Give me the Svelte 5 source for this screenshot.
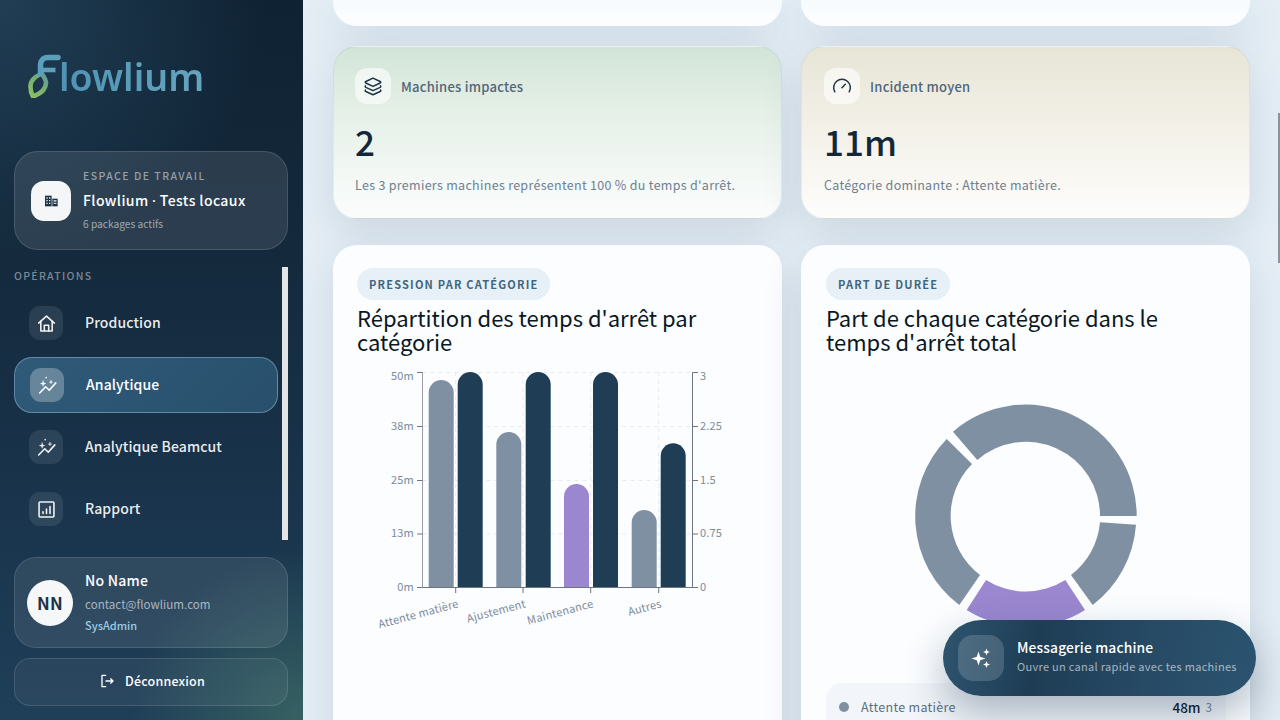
<script>
  const nav = [
    { label: 'Production', icon: 'home' },
    { label: 'Analytique', icon: 'spark', active: true },
    { label: 'Analytique Beamcut', icon: 'spark' },
    { label: 'Rapport', icon: 'report' }
  ];

  const stats = [
    { label: 'Machines impactes', icon: 'layers', value: '2', note: "Les 3 premiers machines représentent 100 % du temps d'arrêt.", tone: 'green' },
    { label: 'Incident moyen', icon: 'gauge', value: '11m', note: 'Catégorie dominante : Attente matière.', tone: 'sand' }
  ];

  // chart geometry, in the coordinates of the svg
  const bottom = 220;
  const bars = [
    { x: 61.7, top: 13, w: 25, color: '#7f90a3' },
    { x: 90.7, top: 5, w: 25, color: '#1f3e56' },
    { x: 129.3, top: 65, w: 25, color: '#7f90a3' },
    { x: 158.7, top: 5, w: 25, color: '#1f3e56' },
    { x: 197, top: 117, w: 25, color: '#9a87d0' },
    { x: 226, top: 5, w: 25, color: '#1f3e56' },
    { x: 264.7, top: 143, w: 25, color: '#7f90a3' },
    { x: 293.7, top: 76.3, w: 25, color: '#1f3e56' }
  ];
  const rows = [
    { y: 5.5, left: '50m', right: '3', shift: 7 },
    { y: 59.5, left: '38m', right: '2.25', shift: 3 },
    { y: 113.5, left: '25m', right: '1.5', shift: 3 },
    { y: 167, left: '13m', right: '0.75', shift: 3 },
    { y: 220.5, left: '0m', right: '0', shift: 3 }
  ];
  const cats = [
    { x: 88.7, label: 'Attente matière' },
    { x: 156, label: 'Ajustement' },
    { x: 223.7, label: 'Maintenance' },
    { x: 291.7, label: 'Autres' }
  ];

  function barPath(b) {
    const r = b.w / 2;
    return `M${b.x} ${bottom}V${b.top + r}A${r} ${r} 0 0 1 ${b.x + b.w} ${b.top + r}V${bottom}Z`;
  }

  const slices = [
    { d: 'M953 431.7A111 111 0 0 1 1136.7 516H1100A74 74 0 0 0 977.3 460Z', color: '#7f90a3' },
    { d: 'M1136 524.7A111 111 0 0 1 1092.7 605L1071 575A74 74 0 0 0 1100 522.3Z', color: '#7f90a3' },
    { d: 'M1085 610A111 111 0 0 1 966.7 610L986 580A74 74 0 0 0 1065.3 580Z', color: '#9a87d0' },
    { d: 'M959.3 605A111 111 0 0 1 946.7 439L972 464A74 74 0 0 0 980 575Z', color: '#7f90a3' }
  ];
</script>

{#snippet icon(name)}
  <svg viewBox="0 0 24 24" fill="none" stroke="currentColor" stroke-width="2" stroke-linecap="round" stroke-linejoin="round">
    {#if name === 'home'}
      <path d="M3 11.5 12 3.5l9 8" />
      <path d="M5.5 9.5V20.5h13V9.5" />
      <path d="M9.5 20.5v-6.5h5v6.5" />
    {:else if name === 'spark'}
      <path d="M3 20.5 10 13.5l4 4 7.5-8.5" />
      <path d="M7 6.5 7.8 9l2.4.8-2.4.8-.8 2.4-.8-2.4-2.4-.8 2.4-.8Z" fill="currentColor" stroke-width="0.4" />
      <path d="M16 6l.5 1.6 1.6.5-1.6.5-.5 1.6-.5-1.6-1.6-.5 1.6-.5Z" fill="currentColor" stroke-width="0.4" />
      <path d="M10.5 3v.01" />
    {:else if name === 'report'}
      <rect x="3.5" y="3.5" width="17" height="17" rx="1" />
      <path d="M8 16.5v-2M12 16.5v-5M16 16.5v-8" />
    {:else if name === 'layers'}
      <path d="M12 2.5 3.4 6.6c-.9.4-.9 1.4 0 1.8L12 12.5l8.6-4.1c.9-.4.9-1.4 0-1.8Z" />
      <path d="M3 11.8c-.6.7-.4 1.4.4 1.8l8.6 4 8.6-4c.8-.4 1-1.1.4-1.8" />
      <path d="M3 16.8c-.6.7-.4 1.4.4 1.8l8.6 3.9 8.6-3.9c.8-.4 1-1.1.4-1.8" />
    {:else if name === 'gauge'}
      <path d="m12 14 4-4" />
      <path d="M3.34 19a10 10 0 1 1 17.32 0" />
    {/if}
  </svg>
{/snippet}

<div class="shell">
  <aside class="sidebar">
    <div class="logo">
      <svg class="logo-mark" viewBox="0 0 36 46" fill="none">
        <defs>
          <linearGradient id="leaf" x1="0" y1="1" x2="0.6" y2="0">
            <stop offset="0" stop-color="#8cc063" />
            <stop offset="0.65" stop-color="#76ae70" />
            <stop offset="1" stop-color="#5f9f9a" />
          </linearGradient>
        </defs>
        <path d="M13 22C6 25 2 29 2.5 35 2.5 39 3.5 42 5 44.5 12 42 18.5 38 18 30 17.5 26 15 24 13 20" stroke="url(#leaf)" stroke-width="4.6" stroke-linejoin="round" />
        <path d="M30 5.5H20C15 5.5 12.5 8.5 12.5 13V21" stroke="#5c9fbc" stroke-width="5.5" stroke-linecap="round" />
        <path d="M12 18H27.5" stroke="#5c9fbc" stroke-width="4.6" />
      </svg>
      <span class="logo-text">lowlium</span>
    </div>

    <div class="workspace">
      <div class="workspace-icon">
        <svg viewBox="0 0 24 24" fill="#1d3347">
          <path d="M3 4h10v16H3Z" />
          <path d="M14 8.5h8V20h-8Z" />
          <path d="M5 6.5h2V8.5H5Zm4 0h2V8.5H9ZM5 10.5h2v2H5Zm4 0h2v2H9ZM5 14.5h2v2H5Zm4 0h2v2H9ZM15.8 11h4.4v1.8h-4.4Zm0 3.5h4.4v1.8h-4.4Z" fill="#f4f6f8" />
        </svg>
      </div>
      <div class="workspace-text">
        <div class="eyebrow">ESPACE DE TRAVAIL</div>
        <div class="workspace-name">Flowlium <span class="mid">·</span> Tests locaux</div>
        <div class="workspace-sub">6 packages actifs</div>
      </div>
    </div>

    <div class="section-label">OPÉRATIONS</div>

    <nav class="nav">
      {#each nav as item}
        <div class="nav-item" class:active={item.active}>
          <span class="nav-icon">{@render icon(item.icon)}</span>
          <span class="nav-label">{item.label}</span>
        </div>
      {/each}
      <div class="side-scroll"></div>
    </nav>

    <div class="user">
      <div class="avatar">NN</div>
      <div class="user-text">
        <div class="user-name">No Name</div>
        <div class="user-mail">contact@flowlium.com</div>
        <div class="user-role">SysAdmin</div>
      </div>
    </div>

    <div class="logout">
      <svg viewBox="0 0 24 24" fill="none" stroke="currentColor" stroke-width="2" stroke-linecap="round" stroke-linejoin="round">
        <path d="M10 3.5H4.5v17H10" />
        <path d="M10.5 12H21M17.5 8.8 21 12l-3.5 3.2" />
      </svg>
      <span>Déconnexion</span>
    </div>
  </aside>

  <main class="main">
    <div class="grid">
      <div class="card stub"></div>
      <div class="card stub"></div>

      {#each stats as s}
        <section class="card stat {s.tone}">
          <div class="stat-head">
            <span class="stat-icon">{@render icon(s.icon)}</span>
            <span class="stat-label">{s.label}</span>
          </div>
          <div class="stat-value">{s.value}</div>
          <div class="stat-note">{s.note}</div>
        </section>
      {/each}

      <section class="card panel">
        <span class="pill">PRESSION PAR CATÉGORIE</span>
        <h2>Répartition des temps d'arrêt par catégorie</h2>
        <svg class="bars" viewBox="0 0 378 280" width="378" height="280">
          <g class="grid-lines">
            {#each rows as r, i}
              {#if i < 4}<line x1="55.5" x2="325.5" y1={r.y} y2={r.y} />{/if}
            {/each}
            {#each cats as c}
              <line x1={c.x} x2={c.x} y1="5" y2="220" />
            {/each}
          </g>
          {#each bars as b}
            <path d={barPath(b)} fill={b.color} />
          {/each}
          <g class="axis">
            <path class="axis-left" d="M55.5 5.5V220.5" />
            <path d="M55.5 220.5H325.5V5.5" />
            {#each rows as r}
              <line x1="50" x2="55.5" y1={r.y} y2={r.y} />
              <line x1="325.5" x2="331" y1={r.y} y2={r.y} />
            {/each}
            {#each cats as c}
              <line x1={c.x} x2={c.x} y1="220.5" y2="226" />
            {/each}
          </g>
          <g class="tick">
            {#each rows as r}
              <text x="47" y={r.y + r.shift} text-anchor="end">{r.left}</text>
              <text x="333" y={r.y + r.shift}>{r.right}</text>
            {/each}
            {#each cats as c}
              <text x={c.x + 3.5} y="240" text-anchor="end" transform="rotate(-15 {c.x + 3.5} 240)">{c.label}</text>
            {/each}
          </g>
        </svg>
      </section>

      <section class="card panel">
        <span class="pill">PART DE DURÉE</span>
        <h2>Part de chaque catégorie dans le temps d'arrêt total</h2>
        <svg class="donut" viewBox="910 400 232 225" width="232" height="225">
          {#each slices as s}
            <path d={s.d} fill={s.color} />
          {/each}
        </svg>
        <div class="legend-row">
          <span class="dot"></span>
          <span class="legend-name">Attente matière</span>
          <span class="legend-value">48m</span>
          <span class="legend-count">3</span>
        </div>
      </section>
    </div>
    <div class="main-scroll"></div>
  </main>

  <div class="fab">
    <span class="fab-icon">
      <svg viewBox="0 0 24 24" fill="currentColor">
        <path d="M9.5 5.5 11.2 10.8 16.5 12.5 11.2 14.2 9.5 19.5 7.8 14.2 2.5 12.5 7.8 10.8Z" />
        <path d="M17.5 2.5l.9 2.6 2.6.9-2.6.9-.9 2.6-.9-2.6-2.6-.9 2.6-.9Z" />
        <path d="M17.5 15l.9 2.6 2.6.9-2.6.9-.9 2.6-.9-2.6-2.6-.9 2.6-.9Z" />
      </svg>
    </span>
    <span class="fab-text">
      <span class="fab-title">Messagerie machine</span>
      <span class="fab-sub">Ouvre un canal rapide avec tes machines</span>
    </span>
  </div>
</div>

<style>
  :global(body) {
    margin: 0;
    font-family: "Noto Sans CJK SC", "Noto Sans", sans-serif;
    overflow: hidden;
  }

  .shell {
    position: relative;
    display: flex;
    width: 1280px;
    height: 720px;
    overflow: hidden;
  }

  /* sidebar */
  .sidebar {
    width: 303px;
    height: 720px;
    flex: none;
    box-sizing: border-box;
    padding: 50px 15px 14px 14px;
    display: flex;
    flex-direction: column;
    color: #fff;
    background:
      radial-gradient(circle at 100% 100%, rgba(70, 120, 105, 0.6), rgba(70, 120, 105, 0) 22%),
      radial-gradient(circle at 0 0, rgba(50, 90, 118, 0.5), rgba(50, 90, 118, 0) 34%),
      linear-gradient(180deg, #0f2233 0%, #14293c 35%, #19344c 70%, #1f3f58 100%);
  }

  .logo {
    height: 48px;
    display: flex;
    align-items: flex-end;
    padding-left: 14px;
  }

  .logo-mark {
    width: 36px;
    height: 46px;
    flex: none;
  }

  .logo-text {
    font-family: "Noto Sans", sans-serif;
    font-size: 37.5px;
    line-height: 48px;
    font-weight: 600;
    margin-left: -5px;
    margin-bottom: -3px;
    color: #5a9cb9;
    background: linear-gradient(90deg, #4f93b5, #67a5bd);
    -webkit-background-clip: text;
    background-clip: text;
    -webkit-text-fill-color: transparent;
  }

  .workspace {
    margin-top: 53px;
    height: 99px;
    box-sizing: border-box;
    border: 1px solid rgba(255, 255, 255, 0.13);
    border-radius: 24px;
    background: rgba(255, 255, 255, 0.1);
    display: flex;
    align-items: center;
    gap: 12px;
    padding: 0 16px;
  }

  .workspace-icon {
    width: 40px;
    height: 40px;
    border-radius: 13px;
    background: #f4f6f8;
    display: flex;
    align-items: center;
    justify-content: center;
  }

  .workspace-icon svg {
    width: 16px;
    height: 16px;
  }

  .eyebrow {
    margin-top: -1px;
    font-size: 10.5px;
    line-height: 14px;
    letter-spacing: 1.45px;
    font-weight: 500;
    color: rgba(255, 255, 255, 0.5);
  }

  .workspace-name {
    margin-top: 7px;
    font-size: 14px;
    line-height: 20px;
    font-weight: 500;
    letter-spacing: 0.4px;
  }

  .mid {
    font-family: "Noto Sans", sans-serif;
  }

  .workspace-sub {
    margin-top: 6px;
    font-size: 10.2px;
    line-height: 14px;
    color: rgba(255, 255, 255, 0.55);
  }

  .section-label {
    margin-top: 19px;
    font-size: 10.5px;
    line-height: 14px;
    letter-spacing: 1.3px;
    font-weight: 500;
    color: rgba(255, 255, 255, 0.45);
  }

  .nav {
    position: relative;
    margin-top: 12px;
    flex: 1;
    display: flex;
    flex-direction: column;
    gap: 6px;
  }

  .nav-item {
    width: 264px;
    height: 56px;
    flex: none;
    box-sizing: border-box;
    display: flex;
    align-items: center;
    gap: 22px;
    padding-left: 14px;
    border-radius: 18px;
    border: 1px solid transparent;
    font-size: 14px;
    font-weight: 500;
    letter-spacing: 0.1px;
    color: rgba(255, 255, 255, 0.93);
  }

  .nav-label {
    padding-bottom: 2px;
  }

  .nav-item.active {
    padding-left: 15px;
    background: linear-gradient(135deg, #2f5a78, #28506d);
    border-color: rgba(160, 205, 230, 0.45);
    color: #fff;
  }

  .nav-icon {
    width: 34px;
    height: 34px;
    flex: none;
    border-radius: 11px;
    background: rgba(255, 255, 255, 0.09);
    display: flex;
    align-items: center;
    justify-content: center;
  }

  .active .nav-icon {
    background: rgba(255, 255, 255, 0.27);
  }

  .nav-icon svg {
    width: 21px;
    height: 21px;
    stroke-width: 1.8;
  }

  .side-scroll {
    position: absolute;
    right: 0;
    top: -28px;
    width: 6px;
    height: 273px;
    background: #e3e4e6;
  }

  .user {
    height: 91px;
    flex: none;
    box-sizing: border-box;
    border: 1px solid rgba(255, 255, 255, 0.12);
    border-radius: 22px;
    background: rgba(255, 255, 255, 0.09);
    display: flex;
    align-items: center;
    gap: 12px;
    padding-left: 12px;
  }

  .avatar {
    width: 46px;
    height: 46px;
    border-radius: 50%;
    background: #f5f7f9;
    color: #1d3347;
    display: flex;
    align-items: center;
    justify-content: center;
    font-size: 17px;
    font-weight: 700;
    letter-spacing: 0.3px;
  }

  .user-text {
    padding-bottom: 2px;
  }

  .user-name {
    font-size: 14px;
    line-height: 18px;
    font-weight: 500;
    letter-spacing: 0.25px;
  }

  .user-mail {
    margin-top: 7px;
    font-size: 11.5px;
    line-height: 16px;
    letter-spacing: 0.05px;
    color: rgba(255, 255, 255, 0.6);
  }

  .user-role {
    margin-top: 6px;
    font-size: 11px;
    line-height: 15px;
    font-weight: 500;
    color: #9ccbe6;
  }

  .logout {
    margin-top: 10px;
    height: 48px;
    flex: none;
    box-sizing: border-box;
    border: 1px solid rgba(255, 255, 255, 0.12);
    border-radius: 16px;
    background: rgba(255, 255, 255, 0.05);
    display: flex;
    align-items: center;
    justify-content: center;
    gap: 10px;
    padding: 0 0 3px 2px;
    font-size: 12.5px;
    font-weight: 500;
    letter-spacing: 0.2px;
  }

  .logout svg {
    width: 16px;
    height: 16px;
  }

  /* main area */
  .main {
    position: relative;
    flex: 1;
    height: 720px;
    overflow: hidden;
    background: #e5eef5;
  }

  .grid {
    display: grid;
    grid-template-columns: 449px 449px;
    grid-template-rows: 26px 173px auto;
    column-gap: 19px;
    padding-left: 30px;
    row-gap: 20px;
  }

  .card {
    background: #fbfdff;
    border-radius: 24px;
    box-shadow: 0 14px 40px rgba(40, 80, 115, 0.14);
    box-sizing: border-box;
  }

  .stub {
    border-radius: 0 0 24px 24px;
    background: linear-gradient(180deg, #f7fbfe, #fdfeff);
  }

  .stat {
    padding: 21px 21px 0;
    border: 1px solid rgba(120, 150, 170, 0.12);
  }

  .green {
    background: linear-gradient(180deg, #d2e4d8 0%, #e4efe6 35%, #f3f8f5 75%, #fbfdfd 100%);
  }

  .sand {
    padding-left: 22px;
    background: linear-gradient(180deg, #e7e5d6 0%, #f0eee3 35%, #f8f7f2 75%, #fdfdfc 100%);
  }

  .stat-head {
    display: flex;
    align-items: center;
    gap: 10px;
  }

  .stat-icon {
    width: 36px;
    height: 36px;
    border-radius: 12px;
    background: rgba(255, 255, 255, 0.6);
    color: #1d3347;
    display: flex;
    align-items: center;
    justify-content: center;
  }

  .stat-icon svg {
    width: 20px;
    height: 20px;
    stroke-width: 1.8;
  }

  .stat-label {
    font-size: 13px;
    font-weight: 500;
    letter-spacing: 0.25px;
    color: #51657a;
  }

  .stat-value {
    margin-top: 15px;
    font-size: 35px;
    line-height: 44px;
    font-weight: 500;
    color: #12283a;
  }

  .stat-note {
    margin-top: 13px;
    font-size: 12.5px;
    line-height: 18px;
    letter-spacing: 0.3px;
    color: #6f8091;
  }

  .panel {
    margin-top: 6px;
    height: 520px;
    padding: 23px 24px 0;
    position: relative;
  }

  .panel + .panel {
    padding-left: 25px;
  }

  .pill {
    display: inline-block;
    height: 32px;
    line-height: 32px;
    padding: 0 12px;
    border-radius: 16px;
    background: #e7f0f6;
    color: #3f6680;
    font-size: 11px;
    font-weight: 700;
    letter-spacing: 1.2px;
  }

  h2 {
    max-width: 380px;
    margin: 5px 0 0;
    font-size: 22px;
    line-height: 24px;
    font-weight: 400;
    color: #0a1722;
  }

  .bars {
    display: block;
    margin: 14px 0 0 10px;
  }

  .grid-lines line {
    stroke: #e6ebf0;
    stroke-dasharray: 4 4;
  }

  .axis path,
  .axis line {
    fill: none;
    stroke: #6d7580;
    stroke-width: 1;
  }

  .axis .axis-left {
    stroke: #9a9ea6;
  }

  .tick text {
    font-size: 11px;
    fill: #7c8b9c;
    letter-spacing: 0.2px;
  }

  .donut {
    position: absolute;
    left: 109px;
    top: 155px;
  }

  .legend-row {
    position: absolute;
    left: 25px;
    right: 24px;
    top: 438px;
    height: 60px;
    border-radius: 16px;
    background: #f2f6fa;
    display: flex;
    align-items: flex-start;
    padding: 14px 14px 0 13px;
    box-sizing: border-box;
    font-size: 12.5px;
    line-height: 20px;
  }

  .dot {
    width: 10px;
    height: 10px;
    border-radius: 50%;
    background: #7f90a3;
    margin: 5px 12px 0 0;
  }

  .legend-name {
    flex: 1;
    color: #5d6f80;
    letter-spacing: 0.3px;
  }

  .legend-value {
    font-size: 13.5px;
    font-weight: 500;
    color: #10202e;
  }

  .legend-count {
    margin-left: 5px;
    font-size: 11.5px;
    color: #6f8091;
  }

  .main-scroll {
    position: absolute;
    right: 0;
    top: 113px;
    width: 2px;
    height: 150px;
    background: #8a949e;
  }

  .fab {
    position: absolute;
    left: 943px;
    top: 620px;
    width: 313px;
    height: 76px;
    box-sizing: border-box;
    border-radius: 38px;
    padding: 15px 0 0 15px;
    display: flex;
    gap: 13px;
    color: #fff;
    background: linear-gradient(100deg, #2e556f 0%, #1e3d55 30%, #274a65 65%, #2b5470 100%);
    box-shadow: 0 18px 40px rgba(20, 45, 70, 0.32);
  }

  .fab-icon {
    width: 46px;
    height: 46px;
    border-radius: 15px;
    background: rgba(255, 255, 255, 0.16);
    display: flex;
    align-items: center;
    justify-content: center;
  }

  .fab-icon svg {
    width: 24px;
    height: 24px;
  }

  .fab-text {
    display: flex;
    flex-direction: column;
    padding-top: 2px;
  }

  .fab-title {
    font-size: 13.8px;
    line-height: 20px;
    font-weight: 500;
    letter-spacing: 0.15px;
  }

  .fab-sub {
    margin-top: 1px;
    font-size: 11px;
    line-height: 16px;
    letter-spacing: 0.3px;
    color: rgba(255, 255, 255, 0.6);
  }
</style>
